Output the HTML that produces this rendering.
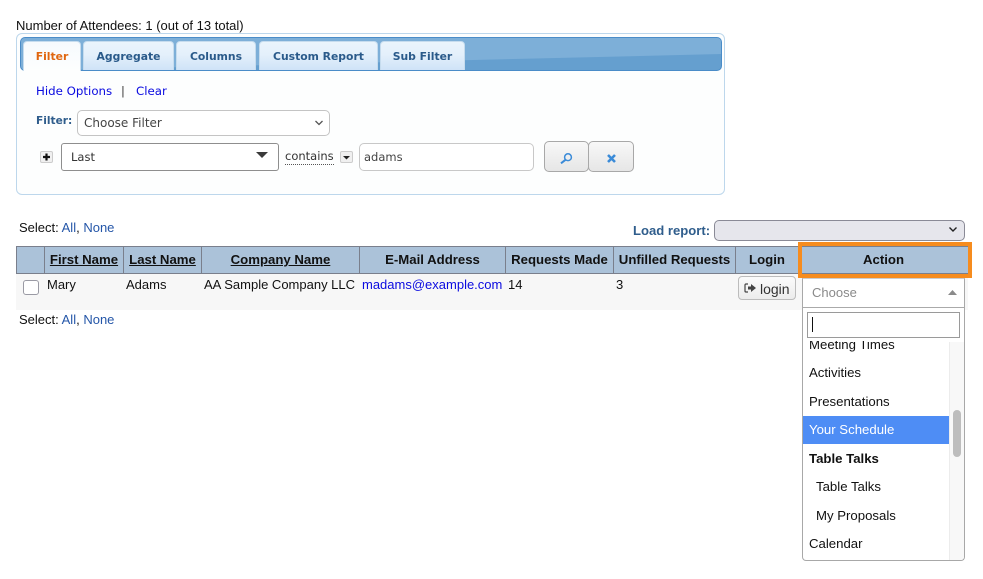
<!DOCTYPE html>
<html><head><meta charset="utf-8">
<style>
html,body{margin:0;padding:0;background:#fff;width:983px;height:579px;overflow:hidden}
body{position:relative;font-family:"Liberation Sans",Arial,sans-serif;font-size:13px;color:#111}
.a{position:absolute;white-space:nowrap}
.dv{font-family:"DejaVu Sans",sans-serif}
.tab{position:absolute;top:41px;height:29px;box-sizing:border-box;border:1px solid #c6dcee;border-bottom:0;border-radius:4px 4px 0 0;background:linear-gradient(#eaf4fc,#e4f0fb 45%,#cfe3f7);font:bold 10.8px/30px "DejaVu Sans",sans-serif;color:#2a5a8a;text-align:center}
.th{position:absolute;top:247px;height:26px;box-sizing:border-box;font:bold 13.2px/25px "Liberation Sans",sans-serif;color:#111;text-align:center;white-space:nowrap}
.thb{position:absolute;top:247px;width:1px;height:26px;background:#7a7f8c}
.u{text-decoration:underline}
.li{position:absolute;left:6px;font-size:13.2px;line-height:15px;color:#111;white-space:nowrap}
</style></head><body>
<div class="a" style="left:16px;top:18px;font-size:13px;line-height:15px">Number of Attendees: 1 (out of 13 total)</div>

<div class="a" style="left:16px;top:33px;width:709px;height:162px;box-sizing:border-box;border:1px solid #bdd7ec;border-radius:6px;background:#fdfefe"></div>
<div class="a" style="left:20px;top:37px;width:702px;height:34px;box-sizing:border-box;border:1px solid #4a8cc8;border-radius:5px;background:#659fcf;overflow:hidden">
  <svg class="a" style="left:0;top:0" width="700" height="32"><path d="M0 0H700V16L0 33Z" fill="#7dafd8"/></svg>
</div>
<div class="tab" style="left:23px;width:58px;height:30px;background:linear-gradient(#f6fafd,#fdfefe);color:#e0660f">Filter</div>
<div class="tab" style="left:83px;width:91px">Aggregate</div>
<div class="tab" style="left:176px;width:80px">Columns</div>
<div class="tab" style="left:259px;width:119px">Custom Report</div>
<div class="tab" style="left:380px;width:85px">Sub Filter</div>

<div class="a dv" style="left:36px;top:84px;font-size:11.8px;line-height:15px;color:#0a0ae0">Hide Options</div>
<div class="a dv" style="left:121px;top:84px;font-size:11.5px;line-height:15px;color:#333">|</div>
<div class="a dv" style="left:136px;top:84px;font-size:11.8px;line-height:15px;color:#0a0ae0">Clear</div>

<div class="a dv" style="left:36px;top:114px;font-size:10.6px;line-height:15px;font-weight:bold;color:#2f5d8c">Filter:</div>
<div class="a" style="left:77px;top:110px;width:253px;height:26px;box-sizing:border-box;border:1px solid #c4c4c4;border-radius:5px;background:#fff"></div>
<div class="a dv" style="left:84px;top:116px;font-size:12px;line-height:15px;color:#444">Choose Filter</div>
<svg class="a" style="left:314px;top:119px" width="10" height="8"><path d="M1.5 2 L5 5.5 L8.5 2" fill="none" stroke="#555" stroke-width="1.3"/></svg>

<div class="a" style="left:40px;top:151px;width:13px;height:12px;box-sizing:border-box;border:1px solid #ccc;border-radius:2px;background:#f0f0f0"></div>
<svg class="a" style="left:40px;top:151px" width="13" height="12"><path d="M6.5 2.5V9.5M3 6H10" stroke="#111" stroke-width="2.2"/></svg>
<div class="a" style="left:61px;top:143px;width:218px;height:28px;box-sizing:border-box;border:1px solid #8e8e8e;border-radius:3px;background:#fff"></div>
<div class="a dv" style="left:71px;top:150px;font-size:11.5px;line-height:15px;color:#333">Last</div>
<svg class="a" style="left:256px;top:152px" width="12" height="8"><path d="M0 0H12L6 6Z" fill="#3a3a3a"/></svg>
<div class="a dv" style="left:285px;top:149px;font-size:11.5px;line-height:15px;color:#333;border-bottom:1px dotted #555">contains</div>
<div class="a" style="left:340px;top:151px;width:13px;height:12px;box-sizing:border-box;border:1px solid #ccc;border-radius:2px;background:#f0f0f0"></div>
<svg class="a" style="left:340px;top:151px" width="13" height="12"><path d="M3 5H10L6.5 8.5Z" fill="#222"/></svg>
<div class="a" style="left:359px;top:143px;width:175px;height:28px;box-sizing:border-box;border:1px solid #c8c8c8;border-radius:5px;background:#fff"></div>
<div class="a dv" style="left:364px;top:150px;font-size:11.5px;line-height:15px;color:#444">adams</div>

<div class="a" style="left:544px;top:141px;width:45px;height:31px;box-sizing:border-box;border:1px solid #a8a8a8;border-radius:5px;background:linear-gradient(#f8f8f8,#e6e6e6)"></div>
<div class="a" style="left:588px;top:141px;width:46px;height:31px;box-sizing:border-box;border:1px solid #a8a8a8;border-radius:5px;background:linear-gradient(#f8f8f8,#e6e6e6)"></div>
<svg class="a" style="left:560px;top:153px" width="13" height="12"><circle cx="8" cy="4.2" r="3.4" fill="none" stroke="#3b8bd8" stroke-width="1.5"/><path d="M5.5 6.8L1 10.3" stroke="#3b8bd8" stroke-width="2"/></svg>
<svg class="a" style="left:606px;top:153px" width="11" height="11"><path d="M2 2L9 9M9 2L2 9" stroke="#3b8bd8" stroke-width="2.6"/></svg>

<div class="a" style="left:19px;top:220px;line-height:15px">Select: <span style="color:#2456a8">All</span>, <span style="color:#2456a8">None</span></div>
<div class="a" style="left:633px;top:223px;line-height:15px;font-weight:bold;color:#2f5d8c;font-size:13.1px">Load report:</div>
<div class="a" style="left:714px;top:220px;width:251px;height:21px;box-sizing:border-box;border:1px solid #8a8a96;border-radius:5px;background:#e6e6ec"></div>
<svg class="a" style="left:948px;top:226px" width="10" height="8"><path d="M1.5 1.5L5 5L8.5 1.5" fill="none" stroke="#222" stroke-width="1.4"/></svg>

<div class="a" style="left:16px;top:246px;width:952px;height:28px;box-sizing:border-box;background:#abc2d9;border:1px solid #7a7f8c;border-width:1px 0"></div>
<div class="a" style="left:16px;top:246px;width:1px;height:28px;background:#7a7f8c"></div>
<div class="thb" style="left:44px"></div>
<div class="thb" style="left:123px"></div>
<div class="thb" style="left:201px"></div>
<div class="thb" style="left:359px"></div>
<div class="thb" style="left:505px"></div>
<div class="thb" style="left:613px"></div>
<div class="thb" style="left:735px"></div>
<div class="th" style="left:45px;width:78px"><span class="u">First Name</span></div>
<div class="th" style="left:124px;width:77px"><span class="u">Last Name</span></div>
<div class="th" style="left:202px;width:157px"><span class="u">Company Name</span></div>
<div class="th" style="left:360px;width:145px">E-Mail Address</div>
<div class="th" style="left:506px;width:107px">Requests Made</div>
<div class="th" style="left:614px;width:121px">Unfilled Requests</div>
<div class="th" style="left:736px;width:62px">Login</div>
<div class="th" style="left:802px;width:163px">Action</div>
<div class="a" style="left:798px;top:242px;width:174px;height:36px;box-sizing:border-box;border:4px solid #f68c1e"></div>

<div class="a" style="left:16px;top:274px;width:952px;height:36px;background:#f7f7f7"></div>
<div class="a" style="left:798px;top:242px;width:174px;height:36px;box-sizing:border-box;border:4px solid #f68c1e"></div>
<div class="a" style="left:23px;top:280px;width:16px;height:15px;box-sizing:border-box;border:1px solid #9a9aa4;border-radius:3px;background:#fff"></div>
<div class="a" style="left:47px;top:277px;line-height:15px">Mary</div>
<div class="a" style="left:126px;top:277px;line-height:15px">Adams</div>
<div class="a" style="left:204px;top:277px;line-height:15px">AA Sample Company LLC</div>
<div class="a" style="left:362px;top:277px;line-height:15px;color:#0a0ae0">madams@example.com</div>
<div class="a" style="left:508px;top:277px;line-height:15px">14</div>
<div class="a" style="left:616px;top:277px;line-height:15px">3</div>
<div class="a" style="left:738px;top:276px;width:58px;height:24px;box-sizing:border-box;border:1px solid #bcbcbc;border-radius:4px;background:linear-gradient(#fbfbfb,#ececec)"></div>
<svg class="a" style="left:744px;top:283px" width="13" height="11"><path d="M4 1H2Q1 1 1 2V8Q1 9 2 9H4" fill="none" stroke="#444" stroke-width="1.2"/><path d="M4 3.5H7V1L12 5L7 9V6.5H4Z" fill="#444"/></svg>
<div class="a" style="left:760px;top:281px;line-height:16px;font-size:14px;color:#333">login</div>

<div class="a" style="left:19px;top:312px;line-height:15px">Select: <span style="color:#2456a8">All</span>, <span style="color:#2456a8">None</span></div>

<div class="a" style="left:802px;top:278px;width:163px;height:283px;box-sizing:border-box;border:1px solid #a8a8a8;border-top-color:#ccc;border-radius:0 0 4px 4px;background:#fff;overflow:hidden">
  <div class="a" style="left:9px;top:6px;font-size:13px;line-height:15px;color:#8a8a8a">Choose</div>
  <svg class="a" style="left:145px;top:10px" width="10" height="7"><path d="M0 6H9L4.5 1Z" fill="#8a8a8a"/></svg>
  <div class="a" style="left:0;top:28px;width:161px;height:1px;background:#aaa"></div>
  <div class="a" style="left:4px;top:33px;width:153px;height:26px;box-sizing:border-box;border:1px solid #9a9a9a;background:#fff"></div>
  <div class="a" style="left:9px;top:38px;width:1px;height:15px;background:#111"></div>
  <div class="a" style="left:146px;top:63px;width:16px;height:219px;background:#f8f8f8;border-left:1px solid #ececec;box-sizing:border-box"></div>
  <div class="a" style="left:150px;top:131px;width:8px;height:47px;border-radius:4px;background:#bdbdbd"></div>
  <div class="a" style="left:0;top:137px;width:146px;height:28px;background:#4e8df5"></div>
  <div class="a" style="left:0;top:62px;width:146px;height:219px;overflow:hidden">
    <div class="li" style="top:-4px;left:6px">Meeting Times</div>
    <div class="li" style="top:24px">Activities</div>
    <div class="li" style="top:53px">Presentations</div>
    <div class="li" style="top:81px;color:#fff">Your Schedule</div>
    <div class="li" style="top:110px;font-weight:bold">Table Talks</div>
    <div class="li" style="top:138px;left:13px">Table Talks</div>
    <div class="li" style="top:167px;left:13px">My Proposals</div>
    <div class="li" style="top:195px">Calendar</div>
  </div>
</div>
</body></html>
